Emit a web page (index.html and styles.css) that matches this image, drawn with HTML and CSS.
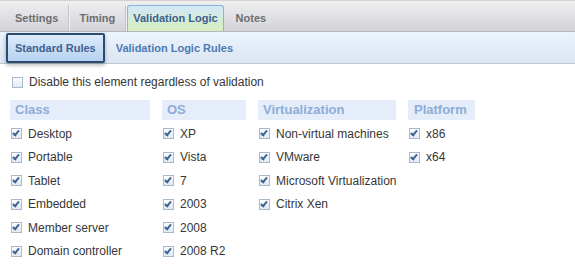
FILE: index.html
```html
<!DOCTYPE html>
<html lang="en">
<head>
<meta charset="UTF-8" />
<title>Validation Logic</title>
<link rel="stylesheet" href="styles.css">
</head>
<body>

<div class="tabs">
  <span class="tab sep">Settings</span>
  <span class="tab sep">Timing</span>
  <span class="tab active">Validation Logic</span>
  <span class="tab">Notes</span>
</div>

<div class="subtabs">
  <span class="subtab current">Standard Rules</span>
  <span class="subtab">Validation Logic Rules</span>
</div>

<div class="content">
  <label class="check disable"><span class="cb"></span>Disable this element regardless of validation</label>

  <div class="groups">
    <div class="group">
      <div class="group-title">Class</div>
      <label class="check"><span class="cb on"></span>Desktop</label>
      <label class="check"><span class="cb on"></span>Portable</label>
      <label class="check"><span class="cb on"></span>Tablet</label>
      <label class="check"><span class="cb on"></span>Embedded</label>
      <label class="check"><span class="cb on"></span>Member server</label>
      <label class="check"><span class="cb on"></span>Domain controller</label>
    </div>
    <div class="group">
      <div class="group-title">OS</div>
      <label class="check"><span class="cb on"></span>XP</label>
      <label class="check"><span class="cb on"></span>Vista</label>
      <label class="check"><span class="cb on"></span>7</label>
      <label class="check"><span class="cb on"></span>2003</label>
      <label class="check"><span class="cb on"></span>2008</label>
      <label class="check"><span class="cb on"></span>2008 R2</label>
    </div>
    <div class="group">
      <div class="group-title">Virtualization</div>
      <label class="check"><span class="cb on"></span>Non-virtual machines</label>
      <label class="check"><span class="cb on"></span>VMware</label>
      <label class="check"><span class="cb on"></span>Microsoft Virtualization</label>
      <label class="check"><span class="cb on"></span>Citrix Xen</label>
    </div>
    <div class="group">
      <div class="group-title platform">Platform</div>
      <label class="check"><span class="cb on"></span>x86</label>
      <label class="check"><span class="cb on"></span>x64</label>
    </div>
  </div>
</div>

</body>
</html>
```

FILE: styles.css
```css
body {
  margin: 0;
  background: #fff;
  font-family: 'Liberation Sans', Arial, sans-serif;
  color: #363636;
}

.tabs {
  display: flex;
  align-items: flex-end;
  height: 30px;
  padding-left: 5px;
  border-top: 1px solid #d8cfd0;
  border-bottom: 1px solid #b6b8bc;
  background: linear-gradient(#efeff0, #d2d3d9);
}

.tab {
  height: 26px;
  line-height: 26px;
  padding: 0 10px;
  font-size: 11px;
  font-weight: bold;
  color: #6e6e6e;
}

.tab.sep {
  border-right: 1px solid #c3c4c8;
  box-shadow: 1px 0 0 #f2f2f4;
}

.tab.active {
  margin-left: 1px;
  padding: 0 5px;
  height: 25px;
  line-height: 25px;
  color: #3c5f8e;
  border: 1px solid #8fb3d6;
  border-bottom: none;
  border-radius: 3px 3px 0 0;
  background: linear-gradient(#d2e8f8, #d6ecd0 70%, #d9efbf);
}

.tab.active + .tab {
  margin-left: 2px;
}

.subtabs {
  display: flex;
  align-items: center;
  height: 31px;
  border-bottom: 1px solid #bcc9cf;
  background: linear-gradient(#ecf4fd, #dbe6f2);
}

.subtab {
  font-size: 11px;
  font-weight: bold;
  color: #4d79b3;
  margin-left: 11px;
}

.subtab.current {
  margin-left: 6px;
  height: 26px;
  line-height: 26px;
  padding: 0 7px;
  color: #3e6192;
  border: 2px solid #2d4a70;
  border-radius: 2px;
  background: linear-gradient(#dcebfb, #b7d2f0);
  box-shadow: 0 2px 4px rgba(0, 0, 0, 0.3);
}

.content {
  height: 213px;
  border-bottom: 2px solid #c9c9c9;
}

.check {
  display: flex;
  align-items: center;
  height: 23.5px;
  font-size: 12px;
  white-space: nowrap;
}

.check.disable {
  height: 16px;
  margin: 10px 0 0 11px;
}

.cb {
  position: relative;
  flex: none;
  width: 9px;
  height: 9px;
  margin: 0 6px 0 1px;
  border: 1px solid #a9b8cb;
  background: linear-gradient(#fbfcfe, #e2eaf4);
}

.cb.on::after {
  content: "";
  position: absolute;
  left: 2px;
  top: 0px;
  width: 2px;
  height: 5px;
  border-right: 2px solid #3f6294;
  border-bottom: 2px solid #3f6294;
  transform: rotate(40deg);
}

.groups {
  display: grid;
  grid-template-columns: 140px 84px 138px 67px;
  column-gap: 12px;
  margin-top: 10px;
  padding-left: 10px;
}

.group-title {
  height: 20px;
  line-height: 20px;
  margin-bottom: 2px;
  padding-left: 5px;
  font-size: 13px;
  font-weight: bold;
  color: #8eacd8;
  background: #e4edf9;
}

.group-title.platform {
  padding-left: 6px;
}
```
